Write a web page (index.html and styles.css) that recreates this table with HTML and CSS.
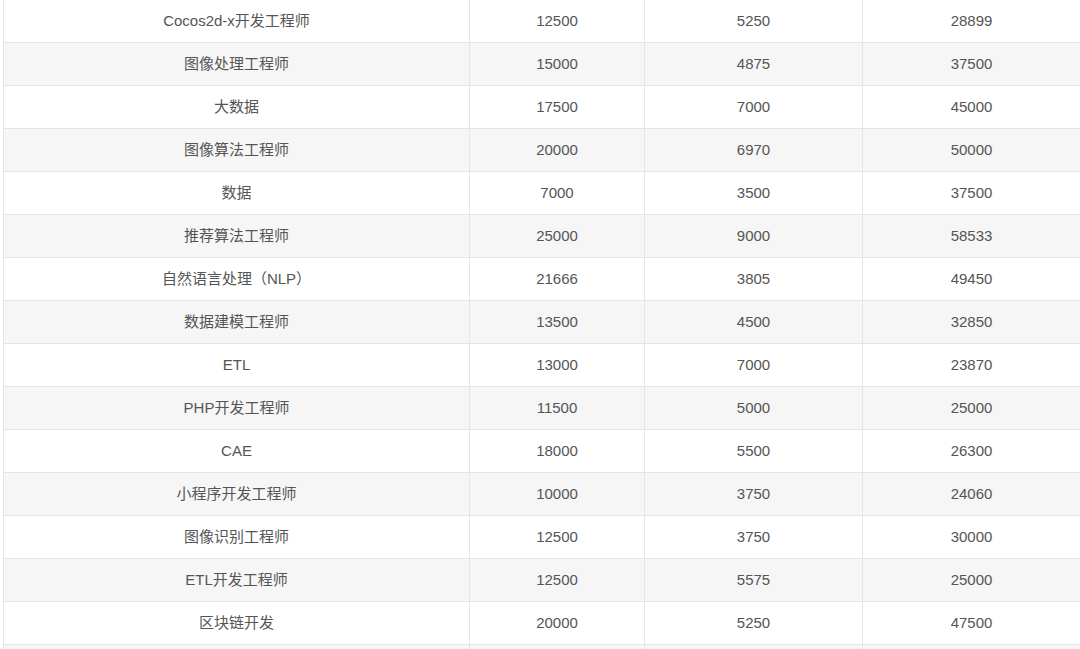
FILE: index.html
```html
<!DOCTYPE html>
<html lang="zh-CN">
<head>
<meta charset="utf-8">
<title>薪资表</title>
<link rel="stylesheet" href="styles.css">
</head>
<body>
<table class="salary-table">
  <colgroup>
    <col class="c-name">
    <col class="c-a">
    <col class="c-b">
    <col class="c-c">
  </colgroup>
  <tbody>
    <tr><td>Cocos2d-x开发工程师</td><td>12500</td><td>5250</td><td>28899</td></tr>
    <tr><td>图像处理工程师</td><td>15000</td><td>4875</td><td>37500</td></tr>
    <tr><td>大数据</td><td>17500</td><td>7000</td><td>45000</td></tr>
    <tr><td>图像算法工程师</td><td>20000</td><td>6970</td><td>50000</td></tr>
    <tr><td>数据</td><td>7000</td><td>3500</td><td>37500</td></tr>
    <tr><td>推荐算法工程师</td><td>25000</td><td>9000</td><td>58533</td></tr>
    <tr><td>自然语言处理（NLP）</td><td>21666</td><td>3805</td><td>49450</td></tr>
    <tr><td>数据建模工程师</td><td>13500</td><td>4500</td><td>32850</td></tr>
    <tr><td>ETL</td><td>13000</td><td>7000</td><td>23870</td></tr>
    <tr><td>PHP开发工程师</td><td>11500</td><td>5000</td><td>25000</td></tr>
    <tr><td>CAE</td><td>18000</td><td>5500</td><td>26300</td></tr>
    <tr><td>小程序开发工程师</td><td>10000</td><td>3750</td><td>24060</td></tr>
    <tr><td>图像识别工程师</td><td>12500</td><td>3750</td><td>30000</td></tr>
    <tr><td>ETL开发工程师</td><td>12500</td><td>5575</td><td>25000</td></tr>
    <tr><td>区块链开发</td><td>20000</td><td>5250</td><td>47500</td></tr>
    <tr><td>&nbsp;</td><td>&nbsp;</td><td>&nbsp;</td><td>&nbsp;</td></tr>
  </tbody>
</table>
</body>
</html>
```

FILE: styles.css
```css
html, body {
  margin: 0;
  padding: 0;
  background: #ffffff;
  overflow: hidden;
}

.salary-table {
  margin: -1px 0 0 3px;
  width: 1077px;
  table-layout: fixed;
  border-collapse: collapse;
  font-family: "Liberation Sans", Arial, "Noto Sans CJK SC", sans-serif;
  font-size: 15px;
  color: #555555;
}

.c-name { width: 466px; }
.c-a { width: 175px; }
.c-b { width: 218px; }
.c-c { width: 218px; }

.salary-table td {
  border: 1px solid #e5e5e5;
  height: 43px;
  padding: 0 8px;
  box-sizing: border-box;
  text-align: center;
  vertical-align: middle;
  line-height: 20px;
  white-space: nowrap;
}

.salary-table tr:nth-child(even) td {
  background: #f6f6f6;
}
```
